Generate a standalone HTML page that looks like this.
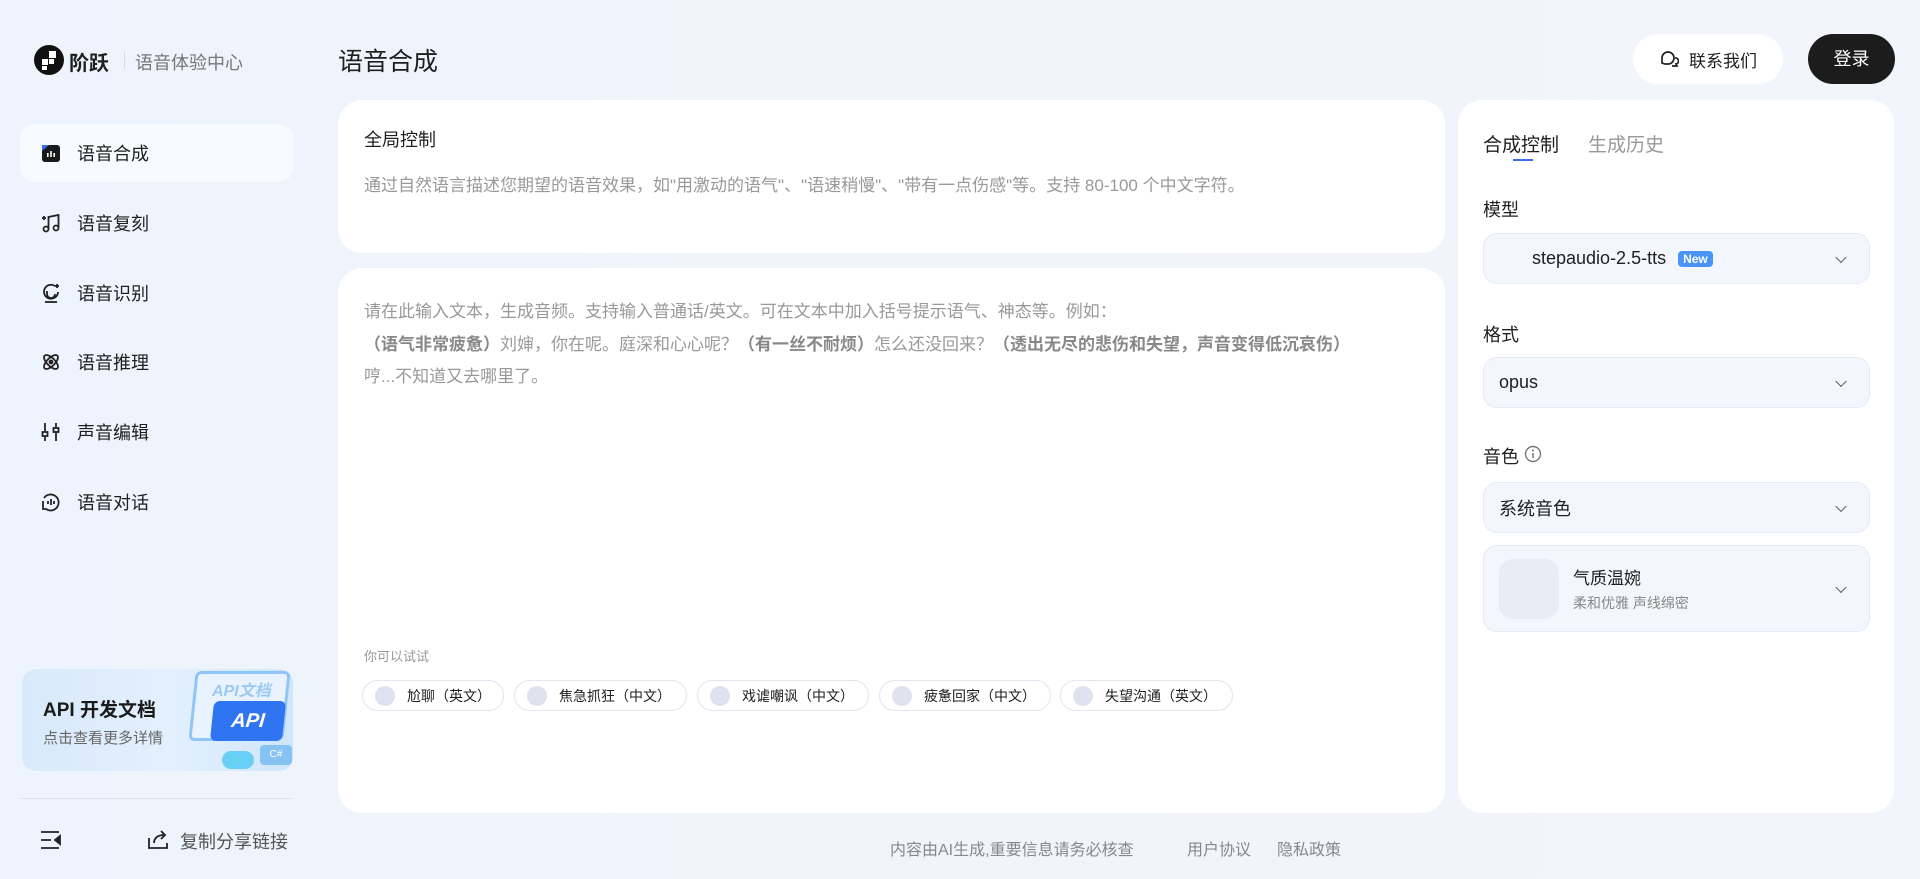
<!DOCTYPE html>
<html><head><meta charset="utf-8">
<style>
*{margin:0;padding:0;box-sizing:border-box}
body{width:1920px;height:879px;overflow:hidden;font-family:"Liberation Sans","Noto Sans CJK SC",sans-serif;background:linear-gradient(90deg,#edf4fd 0%,#f0f4fb 40%,#f2f5fb 100%);color:#1f1f1f;position:relative}
.a{position:absolute}
.nav{position:absolute;left:20px;width:273px;height:58px;border-radius:14px;display:flex;align-items:center;padding-left:20px;font-size:18px;color:#1f1f1f}
.nav svg{width:22px;height:22px;margin-right:15px}
.card{position:absolute;background:#fff;border-radius:24px}
.chip{position:absolute;top:680px;height:31px;border:1px solid #e3e5ef;border-radius:16px;display:flex;align-items:center;padding-left:12px;font-size:14px;color:#1f1f1f;background:#fff}
.chip i{width:20px;height:20px;border-radius:50%;background:#dfe3ef;margin-right:12px}
.sel{position:absolute;left:1483px;width:387px;background:#f3f6fd;border:1px solid #e6eaf5;border-radius:14px;display:flex;align-items:center;font-size:18px}
.chev{position:absolute;right:24px;top:50%;width:8px;height:8px;border-right:1.5px solid #555;border-bottom:1.5px solid #555;transform:translateY(-70%) rotate(45deg)}
.lbl{position:absolute;left:1483px;font-size:18px;color:#1f1f1f}
</style></head><body>
<svg class="a" style="left:34px;top:45px" width="30" height="30" viewBox="0 0 30 30"><circle cx="15" cy="15" r="15" fill="#111"/><rect x="15" y="6" width="7" height="7" fill="#fff"/><rect x="8" y="14" width="6" height="6" fill="#fff"/><rect x="15" y="14" width="5" height="5" fill="#fff"/><rect x="8" y="21" width="5" height="4" fill="#fff"/></svg>
<div class="a" style="left:69px;top:47px;font-size:20px;font-weight:bold">阶跃</div>
<div class="a" style="left:124px;top:52px;width:1px;height:17px;background:#d6d9e0"></div>
<div class="a" style="left:135px;top:49px;font-size:18px;color:#777">语音体验中心</div>
<div class="a" style="left:338px;top:42px;font-size:25px">语音合成</div>

<div class="nav" style="top:124px;background:#f7fafe">
<svg viewBox="0 0 22 22"><rect x="2" y="3" width="18" height="17" rx="3" fill="#1a1a1a"/><path d="M2 9 L9 3 L2 3Z" fill="#3b6cf6"/><rect x="7" y="11" width="1.6" height="4" fill="#fff"/><rect x="10.2" y="9" width="1.6" height="6" fill="#fff"/><rect x="13.4" y="11" width="1.6" height="4" fill="#fff"/></svg>语音合成</div>
<div class="nav" style="top:194px"><svg viewBox="0 0 22 22" fill="none" stroke="#222" stroke-width="1.8"><circle cx="6" cy="17" r="2.5"/><circle cx="16" cy="16" r="2.5"/><path d="M8.5 17V5l10-2v13"/><path d="M2 6h4M4 4v4"/></svg>语音复刻</div>
<div class="nav" style="top:264px"><svg viewBox="0 0 22 22" fill="none" stroke="#222" stroke-width="1.8"><path d="M15 4a7 7 0 1 0 3 6"/><path d="M7 9v3a4 4 0 0 0 8 0"/><path d="M17 2v4M15 4h4"/><path d="M5 20h12"/></svg>语音识别</div>
<div class="nav" style="top:333px"><svg viewBox="0 0 22 22" fill="none" stroke="#222" stroke-width="1.8"><ellipse cx="11" cy="11" rx="9" ry="4" transform="rotate(45 11 11)"/><ellipse cx="11" cy="11" rx="9" ry="4" transform="rotate(-45 11 11)"/><circle cx="11" cy="11" r="1.5" fill="#222"/></svg>语音推理</div>
<div class="nav" style="top:403px"><svg viewBox="0 0 22 22" fill="none" stroke="#222" stroke-width="1.8"><path d="M5 2v8M5 16v4M16 2v4M16 12v8"/><rect x="2.5" y="11" width="5" height="4"/><rect x="13.5" y="7" width="5" height="4"/></svg>声音编辑</div>
<div class="nav" style="top:473px"><svg viewBox="0 0 22 22" fill="none" stroke="#222" stroke-width="1.8"><path d="M4 7a8 8 0 1 1 2 11H3v-8"/><path d="M8 10v3M11 8v6M14 10v3"/></svg>语音对话</div>

<div class="a" style="left:22px;top:669px;width:271px;height:102px;border-radius:14px;background:linear-gradient(90deg,#d8e9fb 0%,#e3f0fd 55%,#cfe6fb 100%);overflow:hidden">
<div class="a" style="left:170px;top:2px;width:95px;height:70px;background:#e8f3ff;border:3px solid #8fc6f7;border-radius:6px;transform:skewX(-6deg)"></div>
<div class="a" style="left:190px;top:8px;font-size:16px;font-weight:bold;color:#9cc9f2;font-style:italic">API文档</div>
<div class="a" style="left:190px;top:32px;width:72px;height:40px;background:#2f74f0;border-radius:6px;transform:skewX(-6deg);color:#fff;font-weight:bold;font-style:italic;font-size:20px;text-align:center;line-height:40px">API</div>
<div class="a" style="left:238px;top:76px;width:32px;height:20px;background:#86c3f3;border-radius:4px;color:#fff;font-size:10px;text-align:center;line-height:20px">C#</div>
<div class="a" style="left:200px;top:82px;width:32px;height:18px;background:#6bd0f5;border-radius:9px"></div>
</div>
<div class="a" style="left:43px;top:695px;font-size:19px;font-weight:bold;color:#1a1a1a">API 开发文档</div>
<div class="a" style="left:43px;top:727px;font-size:15px;color:#666">点击查看更多详情</div>
<div class="a" style="left:20px;top:798px;width:273px;height:1px;background:#dde2ea"></div>
<svg class="a" style="left:40px;top:829px" width="22" height="22" viewBox="0 0 22 22" fill="none" stroke="#222" stroke-width="1.8"><path d="M1 3h18M1 11h10M1 19h18"/><path d="M20 7l-5 4 5 4z" fill="#222"/></svg>
<svg class="a" style="left:147px;top:828px" width="22" height="22" viewBox="0 0 22 22" fill="none" stroke="#222" stroke-width="1.8"><path d="M2 10v10h18v-5"/><path d="M7 15c0-5 4-8 10-8"/><path d="M14 3l4 4-4 4"/></svg>
<div class="a" style="left:180px;top:828px;font-size:18px;color:#555">复制分享链接</div>

<div class="card" style="left:338px;top:100px;width:1107px;height:153px"></div>
<div class="a" style="left:364px;top:126px;font-size:18px">全局控制</div>
<div class="a" style="left:364px;top:171px;font-size:17px;color:#999">通过自然语言描述您期望的语音效果，如"用激动的语气"、"语速稍慢"、"带有一点伤感"等。支持 80-100 个中文字符。</div>

<div class="card" style="left:338px;top:268px;width:1107px;height:545px"></div>
<div class="a" style="left:364px;top:296px;font-size:17px;color:#999;line-height:32.5px;white-space:nowrap">请在此输入文本，生成音频。支持输入普通话/英文。可在文本中加入括号提示语气、神态等。例如：<br><b style="color:#888">（语气非常疲惫）</b>刘婶，你在呢。庭深和心心呢？<b style="color:#888">（有一丝不耐烦）</b>怎么还没回来？<b style="color:#888">（透出无尽的悲伤和失望，声音变得低沉哀伤）</b><br>哼...不知道又去哪里了。</div>
<div class="a" style="left:364px;top:646px;font-size:13px;color:#999">你可以试试</div>
<div class="chip" style="left:362px;width:142px"><i></i>尬聊（英文）</div>
<div class="chip" style="left:514px;width:173px"><i></i>焦急抓狂（中文）</div>
<div class="chip" style="left:697px;width:172px"><i></i>戏谑嘲讽（中文）</div>
<div class="chip" style="left:879px;width:172px"><i></i>疲惫回家（中文）</div>
<div class="chip" style="left:1060px;width:173px"><i></i>失望沟通（英文）</div>

<div class="a" style="left:890px;top:836px;font-size:16px;color:#888">内容由AI生成,重要信息请务必核查</div>
<div class="a" style="left:1187px;top:836px;font-size:16px;color:#888">用户协议</div>
<div class="a" style="left:1277px;top:836px;font-size:16px;color:#888">隐私政策</div>

<div class="a" style="left:1633px;top:34px;width:150px;height:50px;background:#fff;border-radius:25px;display:flex;align-items:center;justify-content:center;font-size:17px"><svg width="20" height="20" viewBox="0 0 20 20" fill="none" stroke="#222" stroke-width="1.7" style="margin-right:10px"><path d="M3 14V9a6 6 0 0 1 12 0 6 6 0 0 1-6 6H6z"/><path d="M16 9a3 3 0 0 1 1 6l1 2h-5"/></svg>联系我们</div>
<div class="a" style="left:1808px;top:34px;width:87px;height:50px;background:#1c1c1c;border-radius:25px;color:#fff;font-size:18px;text-align:center;line-height:50px">登录</div>

<div class="card" style="left:1458px;top:100px;width:436px;height:713px"></div>
<div class="a" style="left:1483px;top:130px;font-size:19px">合成控制</div>
<div class="a" style="left:1588px;top:130px;font-size:19px;color:#999">生成历史</div>
<div class="a" style="left:1513px;top:159px;width:20px;height:2px;background:#3b6cf6"></div>
<div class="lbl" style="top:196px">模型</div>
<div class="sel" style="top:233px;height:51px;padding-left:48px">stepaudio-2.5-tts<span style="margin-left:12px;background:#4a94f8;color:#fff;font-size:12px;font-weight:bold;padding:1px 5px;border-radius:4px">New</span><span class="chev"></span></div>
<div class="lbl" style="top:321px">格式</div>
<div class="sel" style="top:357px;height:51px;padding-left:15px">opus<span class="chev"></span></div>
<div class="lbl" style="top:443px">音色</div>
<svg class="a" style="left:1524px;top:445px" width="18" height="18" viewBox="0 0 18 18"><circle cx="9" cy="9" r="7.5" fill="none" stroke="#777" stroke-width="1.4"/><circle cx="9" cy="5.5" r="1" fill="#777"/><path d="M9 8v5" stroke="#777" stroke-width="1.5"/></svg>
<div class="sel" style="top:482px;height:51px;padding-left:15px">系统音色<span class="chev"></span></div>
<div class="sel" style="top:545px;height:87px;padding-left:15px">
<div style="width:60px;height:60px;border-radius:14px;background:#e8ecf4;margin-right:14px"></div>
<div><div style="font-size:17px">气质温婉</div><div style="font-size:14px;color:#888;margin-top:4px">柔和优雅 声线绵密</div></div><span class="chev"></span></div>
</body></html>
